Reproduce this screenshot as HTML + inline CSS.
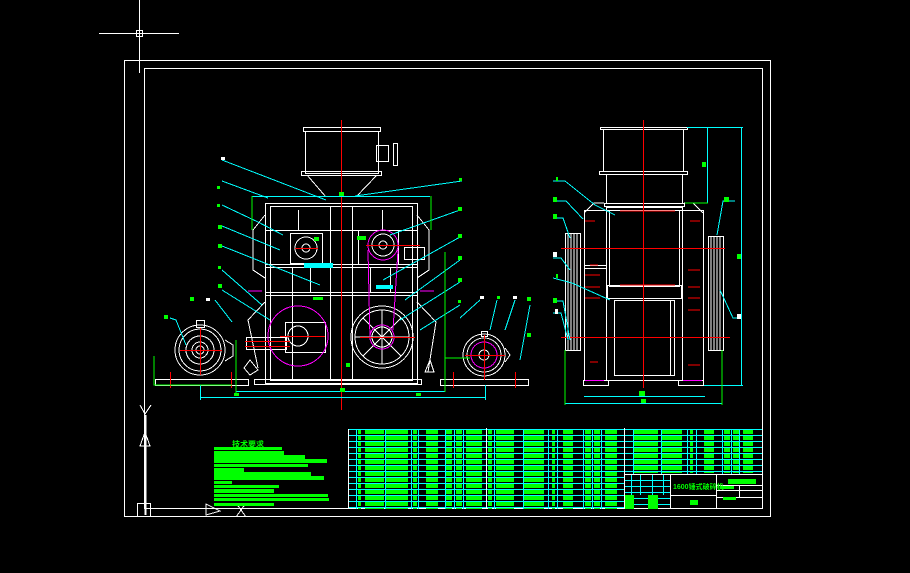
<!DOCTYPE html>
<html><head><meta charset="utf-8"><style>
html,body{margin:0;padding:0;background:#000;width:910px;height:573px;overflow:hidden}
svg{display:block}
</style></head><body>
<svg width="910" height="573" viewBox="0 0 910 573" xmlns="http://www.w3.org/2000/svg" shape-rendering="crispEdges" font-family="'Liberation Sans','Noto Sans CJK SC',sans-serif">
<defs>
<pattern id="g" x="0" y="429" width="1000" height="6" patternUnits="userSpaceOnUse"><rect x="0" y="1" width="1000" height="4" fill="#00ff00"/></pattern>
</defs>
<rect width="910" height="573" fill="#000"/>
<!-- crosshair -->
<g stroke="#fff" stroke-width="1" fill="none">
<line x1="139.5" y1="0" x2="139.5" y2="73"/>
<line x1="99" y1="33.5" x2="179" y2="33.5"/>
<rect x="136.5" y="30.5" width="6" height="6"/>
<!-- frames -->
<rect x="124.5" y="60.5" width="646" height="456"/>
<rect x="144.5" y="68.5" width="618" height="440"/>
<!-- UCS -->
<line x1="145.5" y1="415" x2="145.5" y2="515" stroke-width="2"/>
<path d="M140 405 L145 414 L151 405"/>
<path d="M140 446 L145 432 L150 446 Z"/>
<rect x="137.5" y="503.5" width="13" height="13"/>
<path d="M206 504 L206 515 L220 511 Z"/>
<path d="M236 503 L246 517 M246 503 L236 517"/>
</g>
<!-- tech notes -->
<text x="232" y="447" font-size="8" fill="#00ff00" font-weight="bold">技术要求</text>
<g fill="#00ff00">
<rect x="214" y="447" width="68" height="3"/><rect x="214" y="451" width="70" height="4"/>
<rect x="214" y="455" width="91" height="4"/><rect x="214" y="459" width="113" height="4"/>
<rect x="214" y="464" width="94" height="3"/><rect x="214" y="468" width="30" height="4"/>
<rect x="214" y="472" width="97" height="4"/><rect x="214" y="476" width="110" height="4"/>
<rect x="214" y="481" width="18" height="3"/><rect x="214" y="485" width="65" height="3"/>
<rect x="214" y="489" width="60" height="4"/><rect x="214" y="494" width="114" height="3"/>
<rect x="214" y="498" width="115" height="3"/><rect x="214" y="503" width="60" height="3"/>
</g>
<!-- MAIN VIEW -->
<g fill="none" stroke="#fff" stroke-width="1">
<rect x="303.5" y="127.5" width="77" height="4" />
<rect x="305.5" y="131.5" width="73" height="42"/>
<rect x="301.5" y="171.5" width="80" height="4"/>
<rect x="376.5" y="145.5" width="12" height="16"/><rect x="393.5" y="143.5" width="4" height="22"/>
<path d="M307 175 L326 197 M377 175 L356 197"/>
<rect x="265.5" y="203.5" width="152" height="180"/>
<rect x="270.5" y="206.5" width="142" height="174"/>
<line x1="265" y1="230.5" x2="417" y2="230.5"/>
<line x1="265" y1="264.5" x2="417" y2="264.5"/>
<line x1="265" y1="267.5" x2="417" y2="267.5"/>
<line x1="265" y1="292.5" x2="417" y2="292.5"/>
<line x1="265" y1="295.5" x2="417" y2="295.5"/>
<path d="M265 215 L253 230 L253 270 L265 278 M417 215 L429 230 L429 270 L417 278"/>
<path d="M265 302 L248 320 L258 368 M417 302 L436 322 L428 372"/>
<line x1="298.5" y1="210" x2="298.5" y2="230"/><line x1="382.5" y1="210" x2="382.5" y2="230"/>
<line x1="330.5" y1="206" x2="330.5" y2="380"/><line x1="352.5" y1="206" x2="352.5" y2="380"/>
<line x1="292.5" y1="268" x2="292.5" y2="380"/><line x1="390.5" y1="268" x2="390.5" y2="292"/>
<line x1="310.5" y1="268" x2="310.5" y2="292"/><line x1="370.5" y1="268" x2="370.5" y2="292"/>
<rect x="290.5" y="233.5" width="32" height="30"/>
<circle cx="306" cy="248" r="11"/><circle cx="306" cy="248" r="4"/>
<rect x="358.5" y="230.5" width="40" height="34"/>
<circle cx="383" cy="245" r="11"/><circle cx="383" cy="245" r="4"/>
<rect x="404.5" y="247.5" width="20" height="12"/>
<rect x="285.5" y="322.5" width="40" height="30"/>
<circle cx="298" cy="336" r="10"/>
<rect x="246.5" y="337.5" width="40" height="12"/>
<circle cx="382" cy="337" r="31"/><circle cx="382" cy="337" r="27"/>
<circle cx="382" cy="337" r="10"/>
<path d="M382 310 L382 364 M355 337 L409 337 M363 318 L401 356 M401 318 L363 356"/>
<circle cx="200" cy="350" r="25"/><circle cx="200" cy="350" r="21"/><circle cx="200" cy="350" r="14"/><circle cx="200" cy="350" r="8"/><circle cx="200" cy="350" r="4"/>
<rect x="196.5" y="320.5" width="8" height="7"/>
<path d="M225 340 L233 345 L233 356 L225 361"/>
<circle cx="484" cy="355" r="21"/><circle cx="484" cy="355" r="17"/><circle cx="484" cy="355" r="5"/>
<rect x="481.5" y="331.5" width="6" height="5"/>
<path d="M505 348 L510 355 L505 362"/>
<rect x="155.5" y="379.5" width="93" height="6"/>
<rect x="254.5" y="379.5" width="167" height="5"/>
<rect x="440.5" y="379.5" width="88" height="6"/>
<path d="M250 360 L258 370 L250 375 L244 368 Z M430 360 L434 372 L425 372 Z"/>
</g>
<g fill="none" stroke="#ff00ff" stroke-width="1">
<circle cx="298" cy="336" r="30"/>
<circle cx="383" cy="245" r="15"/>
<circle cx="382" cy="337" r="12"/>
<path d="M368 250 L370 340 M398 250 L393 330"/>
<circle cx="484" cy="355" r="13"/>
<path d="M248 291 L262 291 M420 291 L434 291"/>
</g>
<g fill="none" stroke="#ff0000" stroke-width="1">
<line x1="341.5" y1="120" x2="341.5" y2="410"/>
<line x1="200.5" y1="328" x2="200.5" y2="375"/><line x1="180" y1="350.5" x2="222" y2="350.5"/>
<line x1="484.5" y1="335" x2="484.5" y2="380"/><line x1="465" y1="355.5" x2="505" y2="355.5"/>
<line x1="360" y1="337.5" x2="415" y2="337.5"/><line x1="280" y1="336.5" x2="325" y2="336.5"/>
<line x1="295" y1="248.5" x2="318" y2="248.5"/><line x1="366" y1="245.5" x2="420" y2="245.5"/>
<line x1="245" y1="341.5" x2="290" y2="341.5"/><line x1="245" y1="346.5" x2="290" y2="346.5"/>
<line x1="170.5" y1="372" x2="170.5" y2="388"/><line x1="231.5" y1="372" x2="231.5" y2="388"/>
<line x1="453.5" y1="372" x2="453.5" y2="388"/><line x1="515.5" y1="372" x2="515.5" y2="388"/>
</g>
<g fill="none" stroke="#00ffff" stroke-width="1">
<line x1="200" y1="397.5" x2="485" y2="397.5"/>
<line x1="236" y1="391.5" x2="445" y2="391.5"/>
<line x1="252" y1="196.5" x2="430" y2="196.5"/>
<path d="M222 160 L326 200 M222 181 L268 198 M222 205 L258 222 L283 235 M222 226 L280 250 M222 246 L320 285 M222 270 L262 305 M222 290 L270 320 M215 300 L232 322 M170 318 L176 320 L186 345"/>
<path d="M462 181 L355 196 M460 210 L390 235 M460 237 L383 280 M460 260 L405 300 M460 282 L400 320 M460 305 L420 330 M480 300 L460 318 M497 300 L490 330 M515 300 L505 330 M530 305 L520 360"/>
<line x1="200.5" y1="385" x2="200.5" y2="400"/><line x1="485.5" y1="385" x2="485.5" y2="400"/>
<rect x="304.5" y="263.5" width="28" height="4" fill="#00ffff"/>
<rect x="376.5" y="285.5" width="16" height="3" fill="#00ffff"/>
</g>
<g fill="none" stroke="#00ff00" stroke-width="1">
<path d="M252 196 L252 230 M431 196 L431 230 M154 356 L154 385 L232 385 M445 358 L445 385 M445 358 L470 358 M236 340 L236 393 M445 252 L445 392"/>
</g>
<g fill="#00ff00">
<rect x="339" y="192" width="5" height="4"/><rect x="234" y="393" width="5" height="3"/><rect x="340" y="388" width="5" height="4"/><rect x="416" y="393" width="5" height="3"/>
<rect x="217" y="186" width="3" height="3"/><rect x="217" y="204" width="3" height="3"/><rect x="218" y="225" width="4" height="4"/><rect x="218" y="244" width="4" height="4"/><rect x="218" y="266" width="3" height="3"/><rect x="218" y="284" width="4" height="4"/><rect x="190" y="297" width="4" height="4"/><rect x="164" y="315" width="4" height="4"/>
<rect x="459" y="178" width="3" height="3"/><rect x="458" y="207" width="4" height="4"/><rect x="458" y="234" width="4" height="4"/><rect x="458" y="256" width="4" height="4"/><rect x="458" y="278" width="4" height="4"/><rect x="458" y="300" width="3" height="3"/><rect x="497" y="296" width="3" height="3"/><rect x="527" y="297" width="4" height="4"/><rect x="527" y="333" width="4" height="4"/><rect x="314" y="237" width="5" height="4"/><rect x="357" y="236" width="9" height="4"/><rect x="313" y="297" width="10" height="3"/><rect x="346" y="363" width="4" height="4"/>
</g>
<g fill="#fff"><rect x="221" y="157" width="4" height="3"/><rect x="206" y="298" width="4" height="3"/><rect x="480" y="296" width="4" height="3"/><rect x="513" y="296" width="4" height="3"/></g>
<!-- SIDE VIEW -->
<g fill="none" stroke="#fff" stroke-width="1">
<rect x="600.5" y="127.5" width="87" height="2"/>
<rect x="603.5" y="129.5" width="80" height="42"/>
<rect x="599.5" y="171.5" width="88" height="3"/>
<rect x="606.5" y="174.5" width="76" height="29"/>
<rect x="604.5" y="203.5" width="80" height="3"/>
<path d="M584 213 L594 203 L604 203 M703 213 L693 203 L684 203"/>
<rect x="584.5" y="210.5" width="119" height="170"/>
<rect x="606.5" y="207.5" width="76" height="173"/>
<rect x="609.5" y="210.5" width="70" height="76"/>
<rect x="607.5" y="285.5" width="74" height="13"/>
<rect x="614.5" y="300.5" width="60" height="75"/>
<line x1="670.5" y1="300" x2="670.5" y2="376"/>
<rect x="565.5" y="233.5" width="15" height="117"/>
<rect x="708.5" y="236.5" width="15" height="114"/>
<path d="M568 234 L568 350 M571 234 L571 350 M574 234 L574 350 M577 234 L577 350 M711 237 L711 350 M714 237 L714 350 M717 237 L717 350 M720 237 L720 350"/>
<rect x="583.5" y="380.5" width="25" height="5"/><rect x="678.5" y="380.5" width="25" height="5"/>
<line x1="584" y1="265.5" x2="606" y2="265.5"/><line x1="584" y1="268.5" x2="606" y2="268.5"/>
</g>
<g fill="none" stroke="#ff0000" stroke-width="1">
<line x1="643.5" y1="120" x2="643.5" y2="388"/>
<line x1="561" y1="248.5" x2="725" y2="248.5"/>
<line x1="561" y1="337.5" x2="730" y2="337.5"/>
<path d="M620 211 L675 211 M620 285 L675 285 M585 221 L595 221 M590 265 L598 265 M585 275 L600 275 M585 287 L600 287 M585 298 L600 298 M590 362 L598 362 M690 221 L700 221 M688 270 L700 270 M688 287 L700 287 M688 298 L700 298 M688 310 L700 310 M688 365 L700 365"/>
</g>
<g stroke="#ff00ff"><line x1="585" y1="380.5" x2="604" y2="380.5"/><line x1="683" y1="380.5" x2="702" y2="380.5"/></g>
<g fill="none" stroke="#00ffff" stroke-width="1">
<line x1="741.5" y1="127" x2="741.5" y2="385"/>
<line x1="707.5" y1="127" x2="707.5" y2="203"/>
<line x1="687" y1="127.5" x2="743" y2="127.5"/>
<line x1="704" y1="385.5" x2="743" y2="385.5"/>
<line x1="565" y1="403.5" x2="722" y2="403.5"/>
<line x1="584" y1="396.5" x2="705" y2="396.5"/>
<path d="M553 181 L565 181 L595 205 L615 215 M553 201 L566 201 L583 219 M553 218 L563 218 L570 238 M553 258 L561 258 L570 270 M553 278 L572 283 L610 300 M553 301 L563 301 L570 340 M553 313 L561 313 L568 340 M735 201 L723 201 L717 235 M740 318 L733 318 L720 290"/>
</g>
<g fill="none" stroke="#00ff00"><path d="M565 350 L565 405 M722 350 L722 405 M685 203 L708 203"/></g>
<g fill="#00ff00">
<rect x="702" y="162" width="4" height="5"/><rect x="639" y="391" width="6" height="5"/><rect x="641" y="399" width="5" height="4"/><rect x="737" y="254" width="4" height="5"/><rect x="724" y="197" width="5" height="5"/>
<rect x="556" y="177" width="2" height="4"/><rect x="553" y="197" width="4" height="5"/><rect x="553" y="214" width="4" height="5"/><rect x="556" y="274" width="2" height="4"/><rect x="553" y="298" width="4" height="5"/>
</g>
<g fill="#fff"><rect x="553" y="252" width="4" height="5"/><rect x="555" y="309" width="3" height="5"/><rect x="737" y="314" width="4" height="5"/></g>
<!-- TABLE -->
<g fill="none" stroke="#00ffff" stroke-width="1">
<path d="M348 435.5 H762 M348 441.5 H762 M348 447.5 H762 M348 453.5 H762 M348 459.5 H762 M348 465.5 H762 M348 471.5 H762 M348 477.5 H625 M348 483.5 H625 M348 489.5 H625 M348 495.5 H625 M348 501.5 H625 M348 507.5 H625"/>
<path d="M348 429.5 H762"/>
<path d="M356.5 429 V509 M385.5 429 V509 M411.5 429 V509 M418.5 429 V509 M445.5 429 V509 M454.5 429 V509 M463.5 429 V509 M494.5 429 V509 M523.5 429 V509 M548.5 429 V509 M557.5 429 V509 M583.5 429 V509 M592.5 429 V509 M601.5 429 V509 M633.5 429 V474 M661.5 429 V474 M687.5 429 V474 M696.5 429 V474 M722.5 429 V474 M731.5 429 V474 M739.5 429 V474"/>
<path d="M625 480.5 H670 M625 486.5 H670 M625 492.5 H670 M625 498.5 H670 M625 504.5 H670 M631.5 474 V495 M640.5 474 V495 M652.5 474 V495 M663.5 474 V495"/>
</g>
<g fill="none" stroke="#fff" stroke-width="1">
<path d="M348.5 429 V509 M486.5 428 V509 M624.5 428 V509 M625 474.5 H762 M670.5 474 V509 M716.5 474 V509 M670 495.5 H716 M716 485.5 H762 M716 490.5 H762 M716 497.5 H762 M739.5 485 V497"/>
</g>
<g fill="url(#g)">
<rect x="358" y="429" width="3" height="80"/><rect x="365" y="429" width="19" height="80"/>
<rect x="386" y="429" width="22" height="80"/><rect x="413" y="429" width="4" height="80"/>
<rect x="426" y="429" width="12" height="80"/><rect x="446" y="429" width="6" height="80"/>
<rect x="456" y="429" width="6" height="80"/><rect x="466" y="429" width="16" height="80"/>
<rect x="488" y="429" width="4" height="80"/><rect x="496" y="429" width="18" height="80"/>
<rect x="524" y="429" width="20" height="80"/><rect x="552" y="429" width="3" height="80"/>
<rect x="563" y="429" width="10" height="80"/><rect x="585" y="429" width="6" height="80"/>
<rect x="594" y="429" width="6" height="80"/><rect x="605" y="429" width="12" height="80"/>
<rect x="634" y="429" width="24" height="44"/><rect x="662" y="429" width="20" height="44"/>
<rect x="690" y="429" width="3" height="44"/><rect x="704" y="429" width="10" height="44"/>
<rect x="724" y="429" width="6" height="44"/><rect x="733" y="429" width="6" height="44"/>
<rect x="743" y="429" width="10" height="44"/>
</g>
<g fill="#00ff00">
<rect x="625" y="495" width="9" height="14"/><rect x="648" y="495" width="10" height="14"/>
<rect x="728" y="479" width="28" height="5"/><rect x="720" y="486" width="14" height="3"/><rect x="723" y="497" width="13" height="3"/>
<rect x="690" y="500" width="8" height="5"/>
</g>
<text x="673" y="489" font-size="7" fill="#00ff00" font-weight="bold">1600锤式破碎机</text>
</svg>
</body></html>
